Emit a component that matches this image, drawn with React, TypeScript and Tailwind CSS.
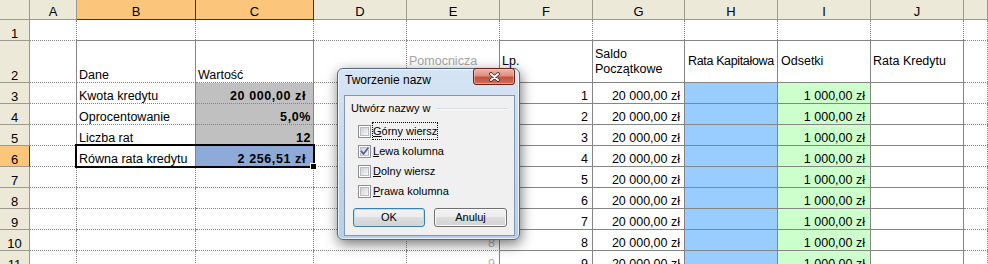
import React from 'react';
import clsx from 'clsx';
import { twMerge } from 'tailwind-merge';

const cn = (...a: any[]) => twMerge(clsx(a));

const W = [
  'w-[47px]',
  'w-[119px]',
  'w-[118px]',
  'w-[93px]',
  'w-[93px]',
  'w-[93px]',
  'w-[92px]',
  'w-[93px]',
  'w-[93px]',
  'w-[93px]',
  'flex-1 min-w-0',
];
const LETTERS = ['A', 'B', 'C', 'D', 'E', 'F', 'G', 'H', 'I', 'J', ''];

type CellDef = {
  r?: boolean;
  b?: boolean;
  bg?: string;
  className?: string;
  children?: React.ReactNode;
};

const GRAY = 'bg-[#c0c0c0]';
const BLUE = 'bg-[#99ccff]';
const GREEN = 'bg-[#ccffcc]';
const SELC = 'bg-[#8eaad6]';
const NUM = 'justify-end pr-[4px]';
const NUM_E = 'justify-end pr-[4px] text-[#b4b4b4]';
const NUM_I = 'justify-end pr-[5px]';
const BOLDR = 'justify-end font-bold tracking-[0.6px]';

function Cell({ col, r, b, bg, className, children }: CellDef & { col: number }) {
  return (
    <div
      className={cn(
        'h-full shrink-0 border-b border-[#858585]',
        b ? 'border-solid' : 'border-dotted',
        W[col],
        bg
      )}
    >
      <div
        className={cn(
          'h-full border-r border-[#858585] flex items-end overflow-hidden whitespace-nowrap px-[2px] text-[12.5px] leading-[13px] text-black',
          r ? 'border-solid' : 'border-dotted',
          className
        )}
      >
        {children}
      </div>
    </div>
  );
}

function RowHeader({ n, sel }: { n: number; sel?: boolean }) {
  return (
    <div
      className={cn(
        'w-[30px] shrink-0 h-full border-r border-b flex items-end justify-center text-[13px] leading-[13px] text-black',
        sel
          ? 'bg-[#fcc57c] border-r-[#1d3590] border-b-[#9d9a8d]'
          : 'bg-[#ece9d8] border-r-[#9d9a8d] border-b-[#9d9a8d]'
      )}
    >
      {n}
    </div>
  );
}

function tableCells(n: number): CellDef[] {
  return [
    { r: true, className: NUM_E, children: String(n - 2) },
    { r: true, b: true, className: NUM, children: String(n - 2) },
    { r: true, b: true, className: NUM, children: '20 000,00 zł' },
    { r: true, b: true, bg: BLUE },
    { r: true, b: true, bg: GREEN, className: NUM_I, children: '1 000,00 zł' },
    { r: true, b: true },
    {},
  ];
}

type RowDef = { n: number; h: string; sel?: boolean; cells: CellDef[] };

const rows: RowDef[] = [
  {
    n: 1,
    h: 'h-[21px]',
    cells: [{}, { b: true }, { b: true }, {}, {}, { b: true }, { b: true }, { b: true }, { b: true }, { b: true }, {}],
  },
  {
    n: 2,
    h: 'h-[42px]',
    cells: [
      { r: true },
      { r: true, children: 'Dane' },
      { r: true, children: 'Wartość' },
      {},
      { r: true, className: 'items-center text-[#a6a6a6]', children: 'Pomocnicza' },
      { r: true, b: true, className: 'items-center', children: 'Lp.' },
      {
        r: true,
        b: true,
        className: 'items-center whitespace-normal leading-[15px]',
        children: 'Saldo Początkowe',
      },
      { r: true, b: true, className: 'items-center pl-[3px] tracking-[-0.35px]', children: 'Rata Kapitałowa' },
      { r: true, b: true, className: 'items-center pl-[3px]', children: 'Odsetki' },
      { r: true, b: true, className: 'items-center', children: 'Rata Kredytu' },
      {},
    ],
  },
  {
    n: 3,
    h: 'h-[21px]',
    cells: [
      { r: true },
      { r: true, children: 'Kwota kredytu' },
      { r: true, bg: GRAY, className: BOLDR + ' pr-[7px]', children: '20 000,00 zł' },
      {},
      ...tableCells(3),
    ],
  },
  {
    n: 4,
    h: 'h-[21px]',
    cells: [
      { r: true },
      { r: true, children: 'Oprocentowanie' },
      { r: true, bg: GRAY, className: BOLDR + ' pr-[2px]', children: '5,0%' },
      {},
      ...tableCells(4),
    ],
  },
  {
    n: 5,
    h: 'h-[21px]',
    cells: [
      { r: true },
      { r: true, b: true, children: 'Liczba rat' },
      { r: true, b: true, bg: GRAY, className: BOLDR + ' pr-[2px]', children: '12' },
      {},
      ...tableCells(5),
    ],
  },
  {
    n: 6,
    h: 'h-[21px]',
    sel: true,
    cells: [
      { r: true },
      { r: true, b: true, children: 'Równa rata kredytu' },
      { r: true, b: true, bg: SELC, className: BOLDR + ' pr-[7px]', children: '2 256,51 zł' },
      {},
      ...tableCells(6),
    ],
  },
  ...[7, 8, 9, 10, 11].map((n) => ({
    n,
    h: 'h-[21px]',
    cells: [{}, {}, {}, {}, ...tableCells(n)],
  })),
];

function HeaderRow() {
  return (
    <div className="flex h-[20px]">
      <div className="w-[30px] shrink-0 h-full border-r border-b border-[#9d9a8d] bg-[#ece9d8]" />
      {LETTERS.map((l, i) => {
        const sel = i === 1 || i === 2;
        return (
          <div
            key={i}
            className={cn(
              'h-full shrink-0 border-r border-b flex items-center justify-center pt-[3px] text-[13px] leading-[13px] text-black',
              W[i],
              sel
                ? 'bg-[#fcc57c] border-r-[#1d3590] border-b-[#1d3590]'
                : 'bg-[#ece9d8] border-r-[#9d9a8d] border-b-[#9d9a8d]'
            )}
          >
            {l}
          </div>
        );
      })}
    </div>
  );
}

function Checkbox({ checked }: { checked?: boolean }) {
  return (
    <div className="relative w-[13px] h-[13px] shrink-0 border border-[#8e8f8f] bg-white">
      <div className="absolute inset-[1px] border border-[#b9bdc3] bg-gradient-to-br from-[#cdd1d6] to-[#f8f8f8]" />
      {checked && (
        <svg className="absolute left-0 top-0" width="11" height="11" viewBox="0 0 11 11">
          <path d="M2.3 5.4 L4.5 7.9 L8.9 2.2" fill="none" stroke="#dfe6f5" strokeWidth="3" strokeLinecap="square" />
          <path d="M2.3 5.4 L4.5 7.9 L8.9 2.2" fill="none" stroke="#4b5d93" strokeWidth="1.7" strokeLinecap="square" />
        </svg>
      )}
    </div>
  );
}

function CheckRow({ checked, focus, k, rest }: { checked?: boolean; focus?: boolean; k: string; rest: string }) {
  return (
    <div className="flex items-center h-[16px] gap-[1px]">
      <Checkbox checked={checked} />
      <span
        className={cn(
          'border px-0 leading-[14px] text-[11px] text-black whitespace-nowrap',
          focus ? 'border-dotted border-black' : 'border-transparent'
        )}
      >
        <span className="underline underline-offset-[1px]">{k}</span>
        {rest}
      </span>
    </div>
  );
}

function Dialog() {
  return (
    <div className="absolute left-[337px] top-[68px] w-[183px] h-[172px] rounded-[6px] border border-[#53677f] bg-gradient-to-b from-[#d6e5f5] via-[#c6d9ee] to-[#b6cfea] shadow-[inset_0_0_0_1px_rgba(255,255,255,0.65),1px_4px_13px_rgba(0,0,0,0.55)] flex flex-col pl-[6px] pr-[4px] pb-[3px]">
      <div className="h-[26px] flex items-start shrink-0">
        <div className="pt-[4px] pl-[1px] text-[12px] leading-[14px] text-black whitespace-nowrap">Tworzenie nazw</div>
        <div className="ml-auto mt-[-1px] w-[42px] h-[17px] rounded-[3px] border border-[#6b2116] bg-[linear-gradient(to_bottom,#ecb6a8_0%,#dc907f_45%,#c4513b_55%,#d0705a_100%)] shadow-[inset_0_0_0_1px_rgba(255,215,205,0.45)] flex items-center justify-center">
          <svg width="13" height="10" viewBox="0 0 13 10">
            <path d="M3 2 L10 8 M10 2 L3 8" stroke="#4a1f17" strokeWidth="3.6" strokeLinecap="round" />
            <path d="M3 2 L10 8 M10 2 L3 8" stroke="#ffffff" strokeWidth="2" strokeLinecap="round" />
          </svg>
        </div>
      </div>
      <div className="flex-1 bg-[#f0f0f0] border border-[#8298b0] flex flex-col">
        <div className="mt-[6px] h-[13px] flex items-center">
          <span className="ml-[6px] text-[11px] leading-[13px] text-black whitespace-nowrap">Utwórz nazwy w</span>
          <div className="flex-1 ml-[6px] mr-[6px] h-[2px] border-t border-t-[#d5dfe5] border-b border-b-white" />
        </div>
        <div className="ml-[13px] mt-[8px] flex flex-col gap-[4px]">
          <CheckRow focus k="G" rest="órny wiersz" />
          <CheckRow checked k="L" rest="ewa kolumna" />
          <CheckRow k="D" rest="olny wiersz" />
          <CheckRow k="P" rest="rawa kolumna" />
        </div>
        <div className="mt-[9px] ml-[8px] flex gap-[9px]">
          <div className="w-[72px] h-[19px] rounded-[3px] border border-[#3c7fb1] bg-[linear-gradient(to_bottom,#f3f3f3_0%,#ececec_49%,#dedede_50%,#d2d2d2_100%)] shadow-[inset_0_0_0_1px_#b3e3f8] flex items-center justify-center text-[11px] leading-[13px] text-black">
            OK
          </div>
          <div className="w-[73px] h-[19px] rounded-[3px] border border-[#707070] bg-[linear-gradient(to_bottom,#f3f3f3_0%,#ececec_49%,#dedede_50%,#d2d2d2_100%)] shadow-[inset_0_0_0_1px_#fbfbfb] flex items-center justify-center text-[11px] leading-[13px] text-black">
            Anuluj
          </div>
        </div>
      </div>
    </div>
  );
}

export default function App() {
  return (
    <div className="relative w-[988px] h-[264px] overflow-hidden bg-white font-['Liberation_Sans',Arial,sans-serif]">
      <HeaderRow />
      {rows.map((row) => (
        <div key={row.n} className={cn('flex', row.h)}>
          <RowHeader n={row.n} sel={row.sel} />
          {row.cells.map((c, i) => (
            <Cell key={i} col={i} {...c} />
          ))}
        </div>
      ))}
      {/* selection outline B6:C6 */}
      <div className="absolute left-[75px] top-[144px] w-[240px] h-[24px] border-2 border-black pointer-events-none" />
      <div className="absolute left-[310px] top-[163px] w-[7px] h-[7px] bg-black border border-white" />
      <Dialog />
    </div>
  );
}
